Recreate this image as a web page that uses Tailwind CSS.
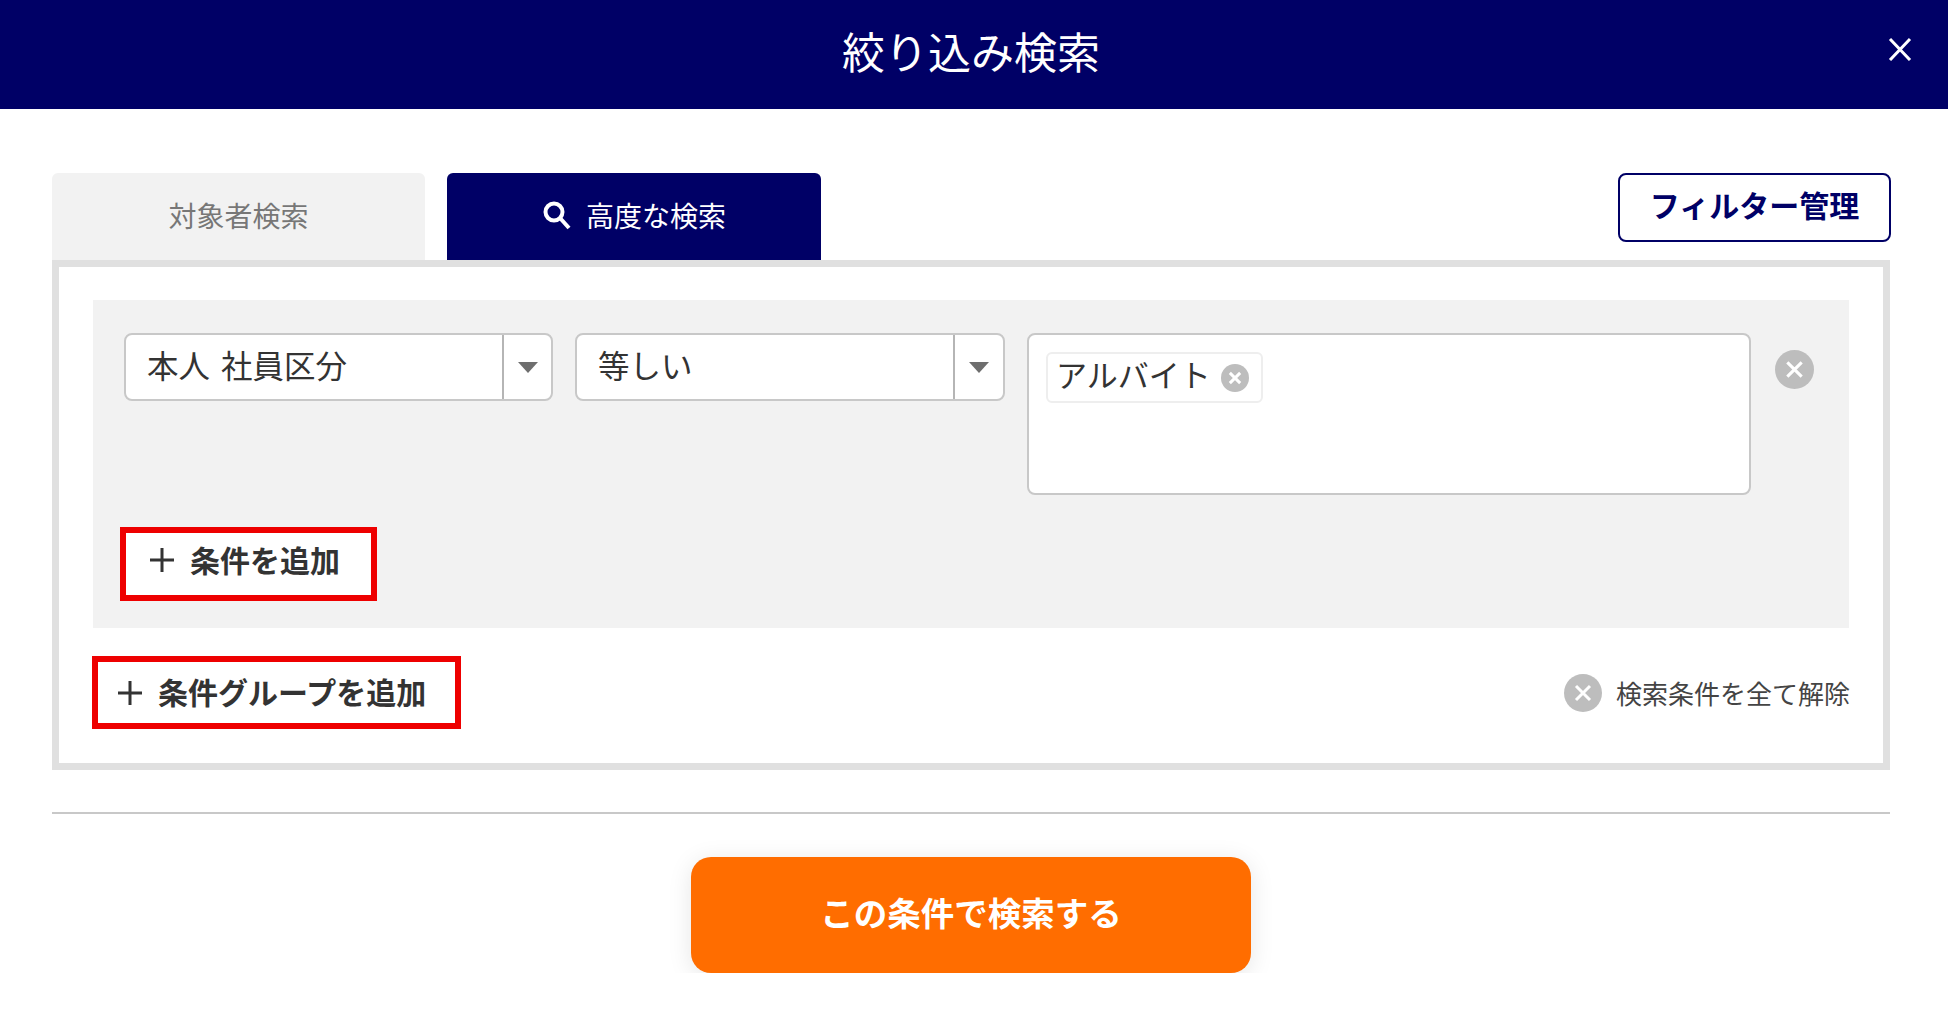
<!DOCTYPE html>
<html lang="ja">
<head>
  <meta charset="UTF-8">
  <meta name="viewport" content="width=device-width, initial-scale=1.0">
  <title>絞り込み検索</title>
  <script src="https://cdn.jsdelivr.net/npm/@tailwindcss/browser@4"></script>
</head>
<body class="bg-white text-[#333] font-['Noto_Sans_CJK_JP','Noto_Sans',sans-serif]">

  <!-- Header -->
  <header class="relative h-[109px] bg-[#000066] flex items-center justify-center">
    <h1 class="text-[43px] leading-none text-white -mt-[9px] -ml-[6px]">絞り込み検索</h1>
    <button class="absolute left-[1888px] top-[37px]" aria-label="閉じる">
      <svg class="w-6 h-6" viewBox="0 0 24 24" fill="none" stroke="#fff" stroke-width="3"><path d="M2 2l20 21M22 2L2 23"/></svg>
    </button>
  </header>

  <main class="pl-[52px] pr-[58px] pt-[64px]">
    <!-- Tabs -->
    <div class="flex items-start h-[87px]">
      <div class="w-[373px] h-[87px] bg-[#f2f2f2] rounded-t-md flex items-center justify-center text-[28px] leading-none text-[#777] pb-[4px]">対象者検索</div>
      <div class="ml-[22px] w-[374px] h-[87px] bg-[#000066] rounded-t-md flex items-center justify-center gap-[14px] text-[28px] leading-none text-white pb-[4px]">
        <svg class="w-[30px] h-[30px]" viewBox="0 0 30 30" fill="none" stroke="#fff" stroke-width="4"><circle cx="12" cy="12" r="8.5"/><path d="M18 18l9 10"/></svg>
        <span>高度な検索</span>
      </div>
      <button class="ml-auto -mr-px w-[273px] h-[69px] bg-white border-2 border-[#000066] rounded-lg flex items-center justify-center text-[30px] font-bold leading-none text-[#000066] pb-[7px]">フィルター管理</button>
    </div>

    <!-- Panel -->
    <section class="h-[510px] border-[7px] border-[#e0e0e0] pt-[33px] pl-[34px] pr-[34px]">
      <div class="h-[328px] bg-[#f2f2f2] pt-[33px] pl-[27px]">
        <div class="flex items-start pl-[4px] h-[162px]">
          <div class="w-[429px] h-[68px] bg-white border-2 border-[#c8c8c8] rounded-lg flex">
            <div class="flex-1 pl-[21px] flex items-center text-[31.5px] leading-none pb-[5px] [word-spacing:4px]">本人 社員区分</div>
            <div class="w-[49px] border-l-2 border-[#b5b5b5] flex items-center justify-center">
              <svg class="w-[20px] h-[11px]" viewBox="0 0 20 11"><path d="M0 0h20L10 11z" fill="#6e6e6e"/></svg>
            </div>
          </div>
          <div class="ml-[22px] w-[430px] h-[68px] bg-white border-2 border-[#c8c8c8] rounded-lg flex">
            <div class="flex-1 pl-[21px] flex items-center text-[31.5px] leading-none pb-[5px]">等しい</div>
            <div class="w-[50px] border-l-2 border-[#b5b5b5] flex items-center justify-center">
              <svg class="w-[20px] h-[11px]" viewBox="0 0 20 11"><path d="M0 0h20L10 11z" fill="#6e6e6e"/></svg>
            </div>
          </div>
          <div class="ml-[22px] w-[724px] h-[162px] bg-white border-2 border-[#c8c8c8] rounded-lg pt-[17px] pl-[17px]">
            <div class="w-[217px] h-[51px] border-2 border-[#eeeeee] rounded-md flex items-center pl-[8px] gap-[10px]">
              <span class="text-[31px] leading-none whitespace-nowrap pb-[8px]">アルバイト</span>
              <svg class="w-[28px] h-[28px] shrink-0" viewBox="0 0 38 38"><circle cx="19" cy="19" r="19" fill="#bdbdbd"/><path d="M12 12l14 14M26 12L12 26" stroke="#fff" stroke-width="4"/></svg>
            </div>
          </div>
          <svg class="ml-[24px] mt-[17px] w-[39px] h-[39px]" viewBox="0 0 38 38"><circle cx="19" cy="19" r="19" fill="#bdbdbd"/><path d="M12 12l14 14M26 12L12 26" stroke="#fff" stroke-width="3"/></svg>
        </div>
        <button class="mt-[32px] w-[257px] h-[74px] bg-white border-[6px] border-[#ee0000] flex items-center pl-[24px] pb-[8px] gap-[16px] text-[30px] font-bold leading-none">
          <svg class="w-[24px] h-[24px]" viewBox="0 0 24 24" fill="none" stroke="#333" stroke-width="3"><path d="M0 12h24M12 0v24"/></svg>
          <span class="pb-[3px]">条件を追加</span>
        </button>
      </div>

      <div class="mt-[28px] flex items-center justify-between">
        <button class="-ml-px w-[369px] h-[73px] bg-white border-[6px] border-[#ee0000] flex items-center pl-[20px] gap-[16px] text-[30px] font-bold leading-none whitespace-nowrap">
          <svg class="w-[24px] h-[24px]" viewBox="0 0 24 24" fill="none" stroke="#333" stroke-width="3"><path d="M0 12h24M12 0v24"/></svg>
          <span class="pb-[3px]">条件グループを追加</span>
        </button>
        <div class="-mr-px flex items-center gap-[14px] text-[26px] leading-none text-[#444]">
          <svg class="w-[38px] h-[38px]" viewBox="0 0 38 38"><circle cx="19" cy="19" r="19" fill="#bdbdbd"/><path d="M12 12l14 14M26 12L12 26" stroke="#fff" stroke-width="3"/></svg>
          <span>検索条件を全て解除</span>
        </div>
      </div>
    </section>

    <hr class="mt-[42px] border-0 h-[2px] bg-[#c8c8c8]">

    <!-- Submit -->
    <div class="mt-[43px] flex justify-center">
      <button class="w-[560px] h-[116px] bg-[#ff6d00] rounded-[20px] shadow-[0_4px_24px_rgba(0,0,0,0.1)] text-white text-[33.5px] font-bold leading-none pb-[6px]">この条件で検索する</button>
    </div>
  </main>
</body>
</html>
